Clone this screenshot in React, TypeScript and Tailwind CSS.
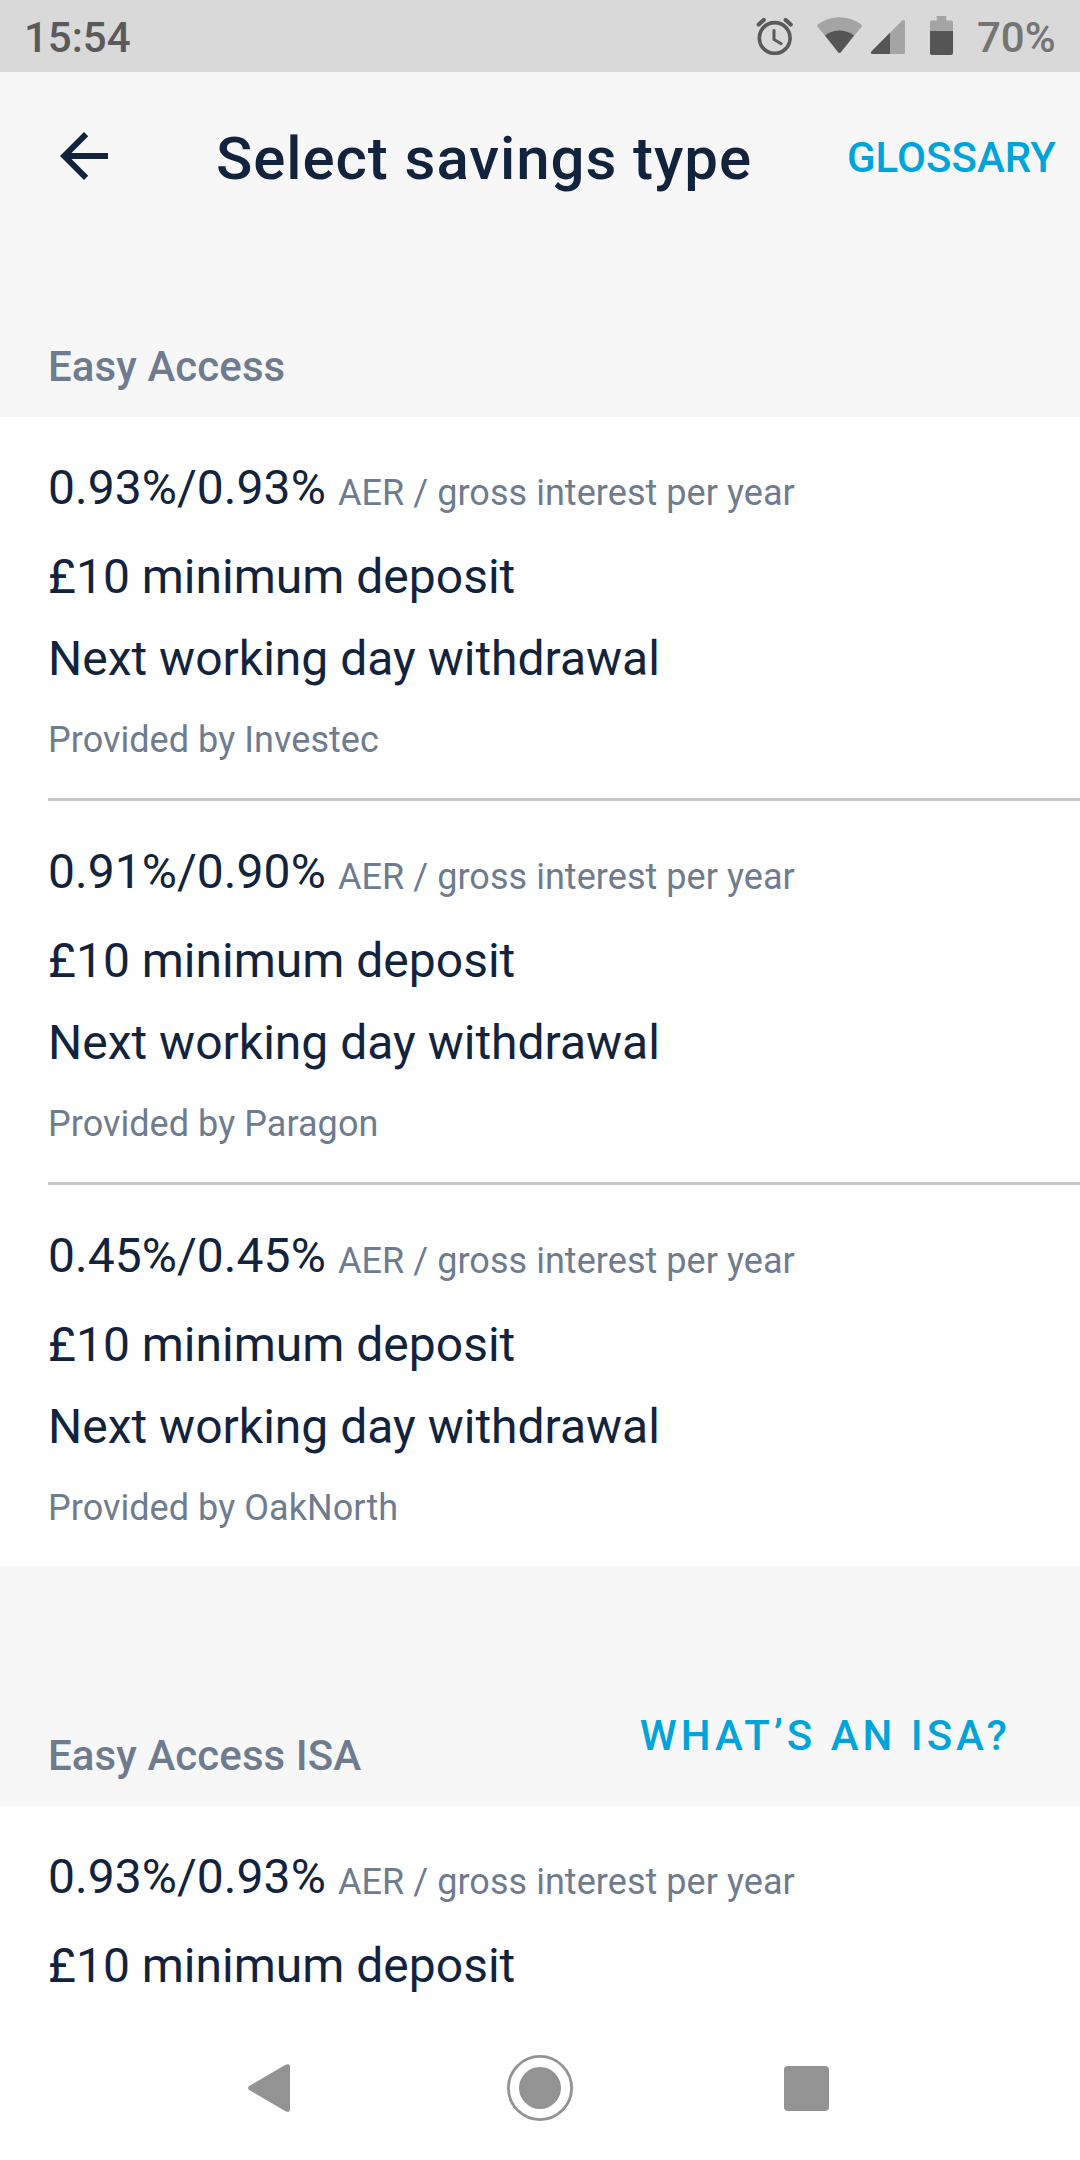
type ProductProps = { rate: string; by?: string; divider?: boolean };

function Product({ rate, by, divider }: ProductProps) {
  return (
    <div className={`ml-12 pt-[41px] ${divider ? "h-[384px] border-b-[3px] border-[#c6c7cc]" : "h-[381px]"}`}>
      <div className="flex h-[60px] whitespace-nowrap leading-[60px]">
        <span className="w-[290px] text-[48px] tracking-[0.05px]">{rate}</span>
        <span className="pt-[5px] text-[36px] tracking-[0.05px] text-[#6f7b8f]">AER / gross interest per year</span>
      </div>
      <div className="mt-[29px] h-[60px] text-[48px] leading-[60px]">£10 minimum deposit</div>
      {by && (
        <>
          <div className="mt-[22px] h-[60px] text-[48px] leading-[60px]">Next working day withdrawal</div>
          <div className="mt-[27px] h-[48px] text-[36px] leading-[48px] tracking-[0.05px] text-[#6f7b8f]">
            Provided by {by}
          </div>
        </>
      )}
    </div>
  );
}

function StatusBar() {
  return (
    <div className="flex h-[72px] shrink-0 items-start bg-[#d9d9d9] px-6 text-[42px] font-medium leading-[50px]">
      <span className="pt-[13px] text-[#5a5a5a]">15:54</span>
      <svg className="ml-auto mt-[17px]" width="37" height="38" viewBox="756 17 37 38" fill="none" stroke="#5a5a5a" strokeLinecap="round">
        <circle cx="774.7" cy="38" r="15.4" strokeWidth="3.6" />
        <path d="M758.7 24.5l5-4.500M790.7 24.500l-5-4.500" strokeWidth="4.200" />
        <path d="M774 30.500v9l7.200 4.200" strokeWidth="3" />
      </svg>
      <svg className="ml-[24px] mt-[16px]" width="46" height="38" viewBox="817 16 46 38">
        <path d="M817.6 26.8C817 26 817 25 818 24.2C831 14.8 848 14.8 861 24.2C862.2 25 862.3 26 861.6 26.8L840.8 52.3Q839.5 53.6 838.2 52.3Z" fill="#a4a4a4" />
        <path d="M825 35.4C833.5 28.7 845.5 28.7 854 35.4L840.8 52.3Q839.5 53.6 838.2 52.3Z" fill="#555" />
      </svg>
      <svg className="ml-[8px] mt-[18px]" width="34" height="38" viewBox="871 18 34 38">
        <path d="M871.4 51.6L902.2 20.6Q905 18.8 905 21.5V52.5Q905 54 903.5 54H872Q870.2 53.4 871.4 51.6Z" fill="#a4a4a4" />
        <path d="M871.4 51.6L890 32.8V54H872Q870.2 53.4 871.4 51.6Z" fill="#555" />
      </svg>
      <svg className="ml-[25px] mt-[16px]" width="23" height="39" viewBox="930 16 23 39">
        <path d="M936.7 16h9.6v4.6h4.7q2 0 2 2V31h-23v-8.4q0-2 2-2h4.7z" fill="#a4a4a4" />
        <path d="M930 31h23v22q0 2-2 2h-19q-2 0-2-2z" fill="#555" />
      </svg>
      <span className="ml-[24px] w-[79px] pt-[13px] text-[#747474]">70%</span>
    </div>
  );
}

function SectionTitle({ children }: { children: string }) {
  return <h2 className="text-[42px] font-medium leading-[48px] tracking-[0.08px] text-[#6f7b8f]">{children}</h2>;
}

export default function App() {
  return (
    <div className="flex h-[2160px] w-[1080px] flex-col overflow-hidden bg-[#f7f7f7] font-['Roboto',sans-serif] text-[#12233d]">
      <StatusBar />
      <header className="flex h-[172px] shrink-0 items-center">
        <svg className="-mt-[4px] ml-12" width="72" height="72" viewBox="0 0 24 24" fill="#12233d">
          <path d="M20 11H7.83l5.59-5.59L12 4l-8 8 8 8 1.41-1.41L7.83 13H20v-2z" />
        </svg>
        <h1 className="ml-24 pt-[2px] text-[60px] font-medium tracking-[0.93px]">Select savings type</h1>
        <button className="-mt-[2px] ml-auto mr-6 text-[42px] font-medium tracking-[0.05px] text-[#00a4db]">GLOSSARY</button>
      </header>
      <div className="flex h-[173px] shrink-0 items-end pb-[26px] pl-12">
        <SectionTitle>Easy Access</SectionTitle>
      </div>
      <section className="shrink-0 bg-white">
        <Product rate="0.93%/0.93%" by="Investec" divider />
        <Product rate="0.91%/0.90%" by="Paragon" divider />
        <Product rate="0.45%/0.45%" by="OakNorth" />
      </section>
      <div className="flex h-[240px] shrink-0 items-end justify-between pb-[26px] pl-12 pr-[69px]">
        <SectionTitle>Easy Access ISA</SectionTitle>
        <button className="mb-[20px] text-[42px] font-medium leading-[48px] tracking-[4px] text-[#00a4db]">WHAT’S AN ISA?</button>
      </div>
      <section className="h-[210px] shrink-0 overflow-hidden bg-white">
        <Product rate="0.93%/0.93%" />
      </section>
      <nav className="flex h-[144px] shrink-0 items-center bg-white pl-[248px]">
        <svg width="43" height="48" viewBox="0 0 43 48" fill="#939393">
          <path d="M1.2 22Q-1.2 24 1.2 26L37.5 47.2Q42 49.2 42 45V3Q42-1.2 37.5.8Z" />
        </svg>
        <svg className="ml-[216px]" width="66" height="66" viewBox="0 0 66 66" fill="none">
          <circle cx="33" cy="33" r="31.6" stroke="#939393" strokeWidth="2.8" />
          <circle cx="33" cy="33" r="21" fill="#939393" />
        </svg>
        <div className="ml-[210.5px] h-[45px] w-[45px] rounded-[4px] bg-[#939393]" />
      </nav>
    </div>
  );
}
